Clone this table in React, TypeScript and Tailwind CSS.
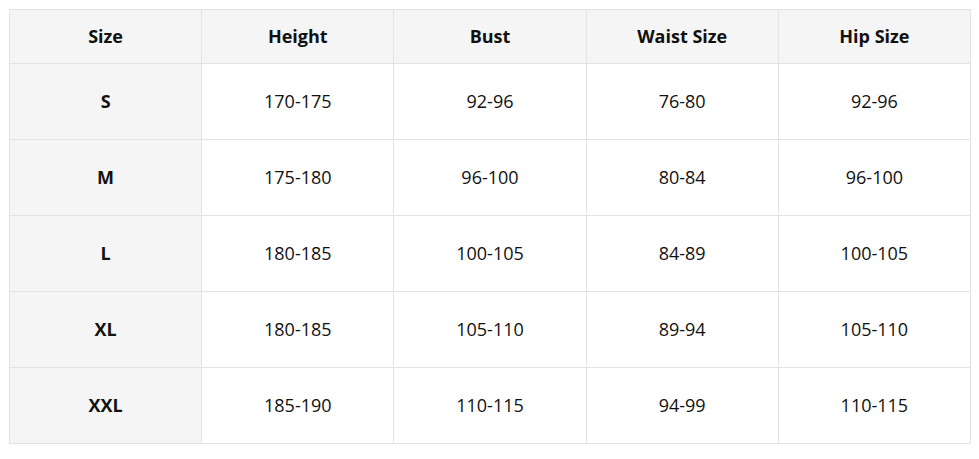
import React from "react";

const headers = ["Size", "Height", "Bust", "Waist Size", "Hip Size"];
const rows = [
  ["S", "170-175", "92-96", "76-80", "92-96"],
  ["M", "175-180", "96-100", "80-84", "96-100"],
  ["L", "180-185", "100-105", "84-89", "100-105"],
  ["XL", "180-185", "105-110", "89-94", "105-110"],
  ["XXL", "185-190", "110-115", "94-99", "110-115"],
];

export default function App() {
  return (
    <div className="w-[979px] h-[459px] bg-white pt-[9px] pl-[9px]" style={{ fontFamily: '"Open Sans", "Noto Sans", sans-serif' }}>
      <div className="w-[962px] grid grid-cols-5 border-l border-t border-[#e3e3e3] text-[#111] text-[18px]">
        {headers.map((h) => (
          <div key={h} className="h-[54px] flex items-center justify-center bg-[#f5f5f5] border-r border-b border-[#e3e3e3] font-bold">
            {h}
          </div>
        ))}
        {rows.map((r) =>
          r.map((c, i) => (
            <div
              key={r[0] + i}
              className={
                "h-[76px] flex items-center justify-center border-r border-b border-[#e3e3e3] " +
                (i === 0 ? "bg-[#f5f5f5] font-bold" : "bg-white")
              }
            >
              {c}
            </div>
          ))
        )}
      </div>
    </div>
  );
}
